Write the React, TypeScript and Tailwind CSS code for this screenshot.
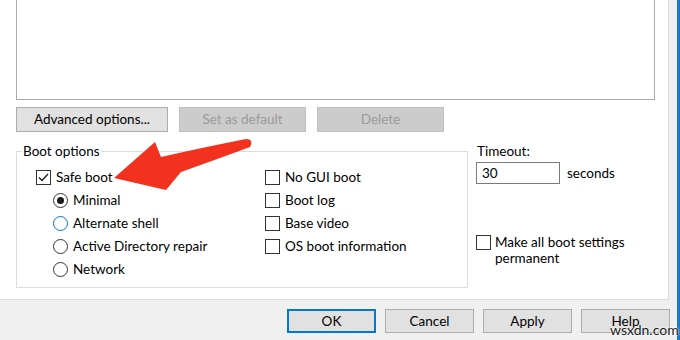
import React from 'react';

const font = { fontFamily: 'Lato, "Noto Sans", "Liberation Sans", sans-serif' };

const CheckBox: React.FC<{ checked?: boolean }> = ({ checked }) => (
  <span className="w-[15px] h-[15px] border border-[#333333] bg-white flex items-center justify-center shrink-0">
    {checked && (
      <svg width="11" height="9" viewBox="0 0 11 9">
        <path d="M1 4.5 L4 7.5 L10 1" fill="none" stroke="#1a1a1a" strokeWidth="1.3" />
      </svg>
    )}
  </span>
);

const Radio: React.FC<{ checked?: boolean; hover?: boolean }> = ({ checked, hover }) => (
  <span
    className={
      'w-[15px] h-[15px] rounded-full border bg-white flex items-center justify-center shrink-0 ' +
      (hover ? 'border-[#0078d7]' : 'border-[#333333]')
    }
  >
    {checked && <span className="w-[7px] h-[7px] rounded-full bg-[#1a1a1a]" />}
  </span>
);

const Row: React.FC<{ children: React.ReactNode; className?: string }> = ({ children, className }) => (
  <div className={'h-[23px] flex items-center gap-[5px] ' + (className || '')}>{children}</div>
);

export default function App() {
  return (
    <div className="relative w-[680px] h-[340px] flex bg-[#f0f0f0] text-[13.5px] text-black overflow-hidden" style={font}>
      <div className="w-[677px] flex flex-col">
        {/* tab page */}
        <div className="w-[669px] h-[300px] bg-white border-r border-b border-[#dadada] pl-[16px] flex flex-col">
          <div className="w-[639px] h-[100px] border-l border-r border-b border-[#a9a9a9]" />

          <div className="flex gap-[11px] mt-[7px]">
            <div className="w-[152px] h-[25px] bg-[#e1e1e1] border border-[#adadad] flex items-center justify-center">
              Advanced options...
            </div>
            <div className="w-[127px] h-[25px] bg-[#cccccc] border border-[#bfbfbf] flex items-center justify-center text-[#9a9a9a]">
              Set as default
            </div>
            <div className="w-[127px] h-[25px] bg-[#cccccc] border border-[#bfbfbf] flex items-center justify-center text-[#9a9a9a]">
              Delete
            </div>
          </div>

          <div className="flex mt-[9px]">
            <fieldset className="w-[452px] h-[147px] border border-[#dcdcdc] pt-[5px] flex">
              <legend className="ml-[5px] px-[1px] leading-[20px]">Boot options</legend>
              <div className="w-[248px] pl-[19px]">
                <Row>
                  <CheckBox checked />
                  <span>Safe boot</span>
                </Row>
                <div className="pl-[17px]">
                  <Row>
                    <Radio checked />
                    <span>Minimal</span>
                  </Row>
                  <Row>
                    <Radio hover />
                    <span>Alternate shell</span>
                  </Row>
                  <Row>
                    <Radio />
                    <span>Active Directory repair</span>
                  </Row>
                  <Row>
                    <Radio />
                    <span>Network</span>
                  </Row>
                </div>
              </div>
              <div>
                <Row>
                  <CheckBox />
                  <span>No GUI boot</span>
                </Row>
                <Row>
                  <CheckBox />
                  <span>Boot log</span>
                </Row>
                <Row>
                  <CheckBox />
                  <span>Base video</span>
                </Row>
                <Row>
                  <CheckBox />
                  <span>OS boot information</span>
                </Row>
              </div>
            </fieldset>

            <div className="ml-[8px] flex flex-col">
              <div className="h-[20px] leading-[20px] pl-[1px]">Timeout:</div>
              <div className="flex items-center mt-[1px]">
                <div className="w-[84px] h-[22px] border border-[#7a7a7a] bg-white pl-[5px] leading-[20px]">30</div>
                <span className="ml-[7px]">seconds</span>
              </div>
              <div className="flex gap-[4px] mt-[51px]">
                <CheckBox />
                <span className="leading-[16px] -mt-[1px]">
                  Make all boot settings
                  <br />
                  permanent
                </span>
              </div>
            </div>
          </div>
        </div>

        {/* dialog buttons */}
        <div className="flex justify-end gap-[9px] pt-[9px] pr-[7px]">
          <div className="w-[89px] h-[24px] bg-[#e1e1e1] border-2 border-[#0078d7] flex items-center justify-center">OK</div>
          <div className="w-[89px] h-[24px] bg-[#e1e1e1] border border-[#adadad] flex items-center justify-center">Cancel</div>
          <div className="w-[89px] h-[24px] bg-[#e1e1e1] border border-[#adadad] flex items-center justify-center">Apply</div>
          <div className="w-[89px] h-[24px] bg-[#e1e1e1] border border-[#adadad] flex items-center justify-center">Help</div>
        </div>
      </div>
      <div className="w-[3px] bg-[#1979ca]" />

      {/* red arrow annotation */}
      <svg className="absolute left-0 top-0 pointer-events-none" width="680" height="340" viewBox="0 0 680 340">
        <path
          d="M114 178 L155 142 L161 157 Q205 147 246 139 Q254 139 250 147 Q212 161 181 172 L166 190 Z"
          fill="#f2311e"
        />
      </svg>

      {/* watermark */}
      <span
        className="absolute left-[610px] top-[321px] text-[14px] leading-[18px] text-[#1a1a1a]"
        style={{ textShadow: '0 0 2px #fff, 0 0 2px #fff' }}
      >
        wsxdn.com
      </span>
    </div>
  );
}
